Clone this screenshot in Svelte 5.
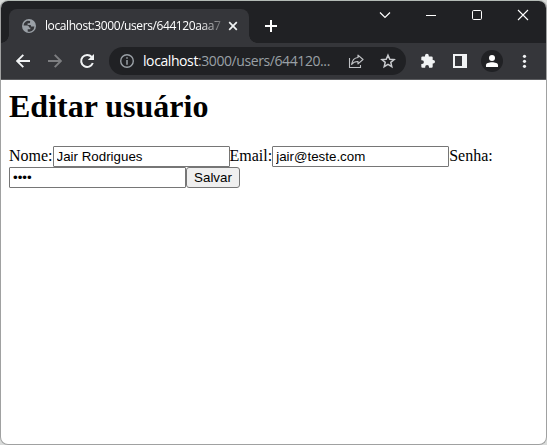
<script>
  let nome = $state('Jair Rodrigues');
  let email = $state('jair@teste.com');
  let senha = $state('1234');
</script>

<div class="window">
  <header class="titlebar">
    <div class="tab">
      <svg class="globe" width="14" height="14" viewBox="0 0 14 14">
        <circle cx="7" cy="7" r="7" fill="#9aa0a6" />
        <path d="M5.2 1.7Q3 2.7 2 4.6L1.6 6.6h3.8q1.7 0 1.7 1.9h1.2v1.8H5.7v2.1q4 1 6-2.2l.7-2.6H9.8q-1 0-1-1.2V5.9H5.6V4.2h1.6q.9 0 .9-1V1.9Z" fill="#35363a" />
      </svg>
      <span class="tab-title">localhost:3000/users/644120aaa7</span>
      <svg class="tab-close" width="10" height="10" viewBox="0 0 10 10"><path d="M1.2 1.2l7.6 7.6M8.8 1.2L1.2 8.8" stroke="#f1f3f4" stroke-width="1.7" /></svg>
    </div>
    <svg class="new-tab" width="12" height="12" viewBox="0 0 12 12"><path d="M6 0v12M0 6h12" stroke="#fff" stroke-width="2" /></svg>
    <div class="controls">
      <svg width="46" height="28" viewBox="0 0 46 28"><path d="M18 11.5l5 5 5-5" fill="none" stroke="#fff" stroke-width="1.2" /></svg>
      <svg width="46" height="28" viewBox="0 0 46 28"><path d="M18 14.5h10" stroke="#fff" /></svg>
      <svg width="46" height="28" viewBox="0 0 46 28"><rect x="18.5" y="9.5" width="9" height="9" rx="1.2" fill="none" stroke="#fff" /></svg>
      <svg width="46" height="28" viewBox="0 0 46 28"><path d="M18 9l10 10M28 9L18 19" stroke="#fff" stroke-width="1.1" /></svg>
    </div>
  </header>

  <nav class="toolbar">
    <svg width="32" height="28" viewBox="-16 -14 32 28"><path d="M7 0H-5.5M.3-6.2L-5.9 0L.3 6.2" fill="none" stroke="#f1f3f4" stroke-width="1.9" /></svg>
    <svg width="32" height="28" viewBox="-16 -14 32 28"><path d="M-7 0H5.5M-.3-6.2L5.9 0L-.3 6.2" fill="none" stroke="#7d7e81" stroke-width="1.9" /></svg>
    <svg width="32" height="28" viewBox="-16 -14 32 28">
      <path d="M4.7-4A6 6 0 1 0 5.8 2" fill="none" stroke="#f1f3f4" stroke-width="2" />
      <path d="M7-7V-.9H.8Z" fill="#f1f3f4" />
    </svg>
    <div class="address">
      <svg width="14" height="14" viewBox="0 0 14 14"><circle cx="7" cy="7" r="6.3" fill="none" stroke="#9aa0a6" stroke-width="1.4" /><path d="M7 3.2v1.5M7 6v4.8" stroke="#9aa0a6" stroke-width="1.5" /></svg>
      <span class="url"><b>localhost</b>:3000/users/644120...</span>
      <svg width="32" height="28" viewBox="-16 -14 32 28">
        <path d="M-6.5-3V6.5H4.5V4" fill="none" stroke="#bfc1c4" stroke-width="1.1" />
        <path d="M2-5.9L7-1.5L2 2.9V.5Q-2 .3-4.4 3.4Q-3.4-3 2-3.5Z" fill="none" stroke="#bfc1c4" stroke-width="1.2" stroke-linejoin="round" />
      </svg>
      <svg width="32" height="28" viewBox="-16 -14 32 28">
        <path d="M0-5.8L1.8-1.8L6.1-1.4L2.8 1.4L3.8 5.7L0 3.4L-3.8 5.7L-2.8 1.4L-6.1-1.4L-1.8-1.8Z" fill="none" stroke="#c9cbce" stroke-width="1.5" />
      </svg>
    </div>
    <svg width="32" height="28" viewBox="-16 -14 32 28">
      <path d="M-5.6-4.6H-3V-5.3A1.9 1.9 0 0 1 .8-5.3V-4.6H3.5Q4.7-4.6 4.7-3.4V-1H5.2A1.8 1.8 0 0 1 5.2 2.6H4.7V5.6Q4.7 6.8 3.5 6.8H1V6A1.9 1.9 0 0 0-2.8 6V6.8H-5.5Q-6.7 6.8-6.7 5.6V3H-6A1.9 1.9 0 0 0-6-.8H-6.7V-3.4Q-6.7-4.6-5.6-4.6Z" fill="#f1f3f4" />
    </svg>
    <svg width="32" height="28" viewBox="-16 -14 32 28"><path d="M-7-7H7V7H-7ZM-5-5V5H2V-5Z" fill="#f1f3f4" fill-rule="evenodd" /></svg>
    <svg width="32" height="28" viewBox="-16 -14 32 28"><circle r="11" fill="#202124" /><circle cy="-3" r="3" fill="#fff" /><path d="M-6 6V4.2C-6 .4 6 .4 6 4.2V6Z" fill="#fff" /></svg>
    <svg width="32" height="28" viewBox="-16 -14 32 28"><g fill="#f1f3f4"><circle cx=".5" cy="-4.7" r="1.6" /><circle cx=".5" cy=".3" r="1.6" /><circle cx=".5" cy="5.3" r="1.6" /></g></svg>
  </nav>

  <main>
    <h1>Editar usuário</h1>
    <form onsubmit={(e) => e.preventDefault()}>
      <label for="nome">Nome:</label><input id="nome" type="text" bind:value={nome} /><label for="email">Email:</label><input id="email" type="text" bind:value={email} /><label for="senha">Senha:</label><input id="senha" type="password" bind:value={senha} /><button>Salvar</button>
    </form>
  </main>
</div>

<style>
  :global(body) {
    background: #d9dbda;
  }
  .window {
    box-sizing: border-box;
    width: 547px;
    height: 445px;
    border: 1px solid #a0a1a1;
    border-top-color: #b3bab5;
    border-radius: 8px;
    overflow: hidden;
    background: #fff;
    display: flex;
    flex-direction: column;
  }
  svg {
    display: block;
    flex: none;
  }
  .titlebar {
    height: 42px;
    flex: none;
    display: flex;
    background: #202124;
    padding-left: 8px;
  }
  .tab {
    position: relative;
    width: 240px;
    height: 34px;
    margin-top: 8px;
    box-sizing: border-box;
    padding: 0 11px 0 13px;
    display: flex;
    align-items: center;
    background: #35363a;
    border-radius: 8px 8px 0 0;
  }
  .tab::before,
  .tab::after {
    content: '';
    position: absolute;
    bottom: 0;
    width: 8px;
    height: 8px;
  }
  .tab::before {
    left: -8px;
    background: radial-gradient(circle at 0 0, transparent 7.5px, #35363a 8px);
  }
  .tab::after {
    right: -8px;
    background: radial-gradient(circle at 100% 0, transparent 7.5px, #35363a 8px);
  }
  .tab-title {
    width: 176px;
    margin-left: 9px;
    overflow: hidden;
    white-space: nowrap;
    font: 12px/18px 'Open Sans', 'Noto Sans', sans-serif;
    letter-spacing: -0.41px;
    color: #fff;
    mask-image: linear-gradient(to right, #000 154px, transparent 184px);
  }
  .tab-close {
    margin-left: auto;
  }
  .new-tab {
    margin: 19px 0 0 16px;
  }
  .controls {
    display: flex;
    margin-left: auto;
  }
  .toolbar {
    height: 37px;
    flex: none;
    box-sizing: border-box;
    padding: 4px 6px;
    display: flex;
    background: #35363a;
    border-bottom: 1px solid #5b5c5f;
  }
  .address {
    width: 297px;
    height: 28px;
    margin: 0 6px;
    box-sizing: border-box;
    padding: 0 2px 0 11px;
    display: flex;
    align-items: center;
    border-radius: 14px;
    background: #202124;
  }
  .url {
    margin-left: 9px;
    flex: 1;
    white-space: nowrap;
    font: 14px/20px 'Open Sans', 'Noto Sans', sans-serif;
    letter-spacing: -0.41px;
    color: #9aa0a6;
  }
  .url b {
    font-weight: 400;
    color: #fff;
  }
  main {
    padding: 8px;
    font: 16px 'Liberation Serif', 'Times New Roman', serif;
    color: #000;
  }
  h1 {
    margin: 0 0 21px;
    font-size: 32px;
    line-height: 37px;
    font-weight: 700;
  }
  form {
    line-height: 18px;
  }
  input,
  button {
    box-sizing: border-box;
    height: 21px;
    margin: 0;
    border: 1px solid #767676;
    font: 13.333px 'Liberation Sans', Arial, sans-serif;
    color: #000;
  }
  input {
    width: 177px;
    padding: 2px 3px;
    border-radius: 1px;
    background: #fff;
  }
  button {
    width: 54px;
    padding: 1px 6px;
    border-radius: 3px;
    background: #efefef;
  }
</style>
